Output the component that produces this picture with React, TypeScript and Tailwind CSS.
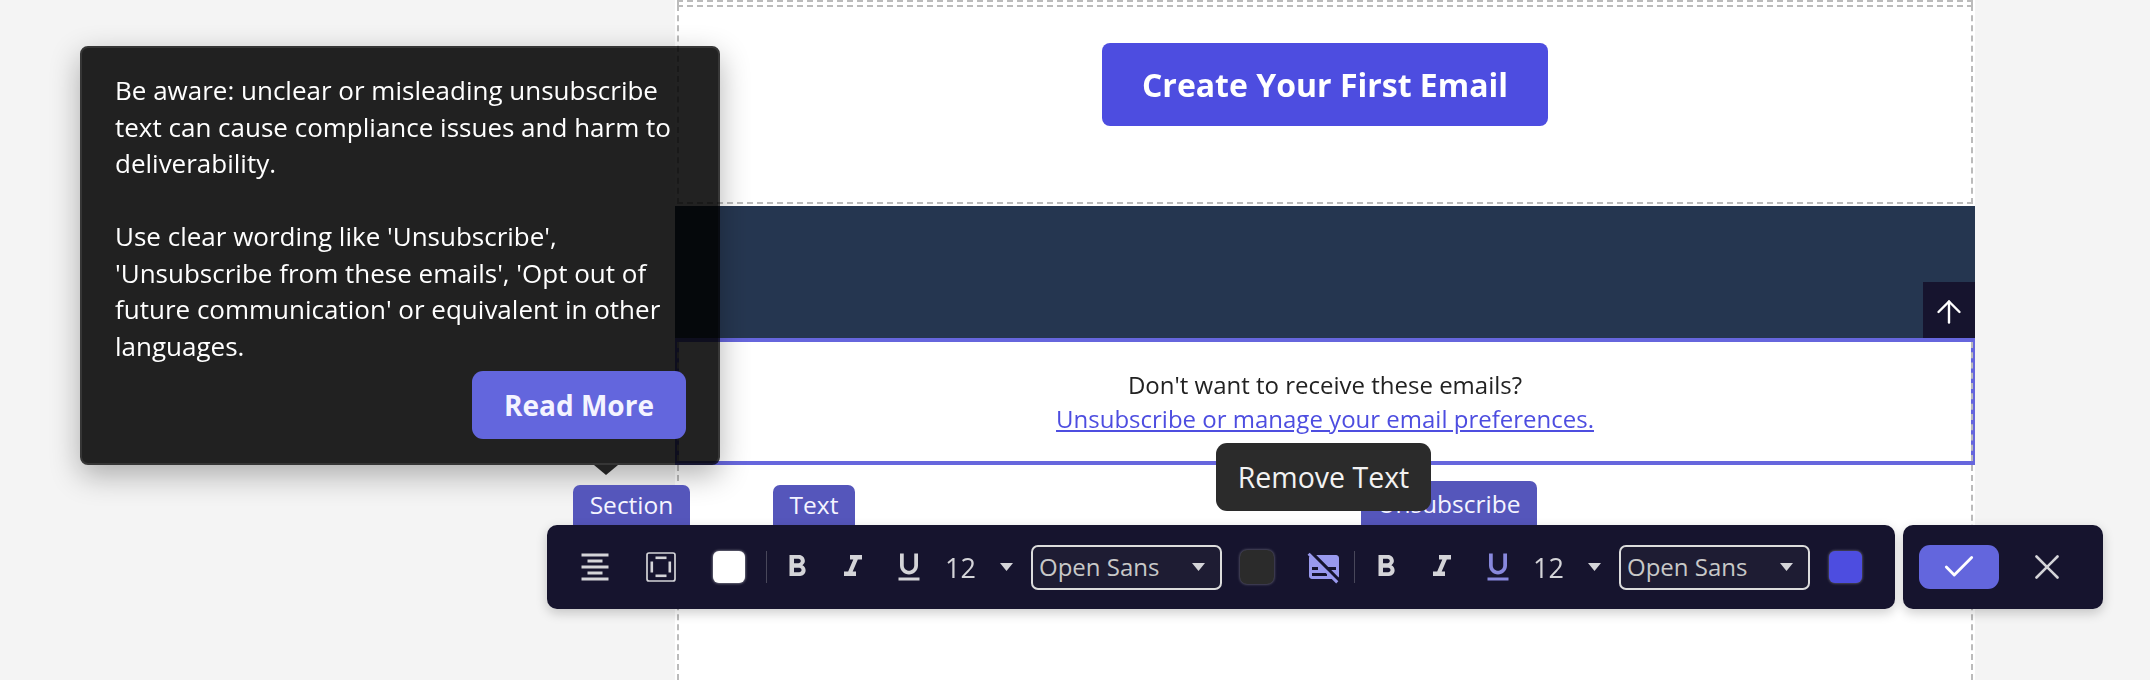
import React from "react";
import { ArrowUp, Check, X } from "lucide-react";
import {
  MdFormatAlignCenter,
  MdFormatBold,
  MdFormatItalic,
  MdFormatUnderlined,
  MdSubtitlesOff,
} from "react-icons/md";

const PaddingIcon = () => (
  <svg width="30" height="30" viewBox="0 0 30 30" fill="#d4d4d8">
    <rect x="1" y="1" width="28" height="28" rx="2" fill="none" stroke="#d4d4d8" strokeWidth="1.7" />
    <rect x="9.5" y="4.5" width="11" height="2.6" />
    <rect x="9.5" y="22.5" width="11" height="2.6" />
    <rect x="4.5" y="9.5" width="2.6" height="11" />
    <rect x="22.5" y="9.5" width="2.6" height="11" />
  </svg>
);

const Caret = () => (
  <svg width="13" height="8" viewBox="0 0 13 8" className="shrink-0">
    <path d="M0 0h13L6.5 8z" fill="#d4d4d8" />
  </svg>
);

const FontSelect = ({ className }: { className: string }) => (
  <div
    className={`flex h-[45px] w-[191px] items-center justify-between rounded-[7px] border-2 border-[#dcdcdc] bg-[#1e1c33] pl-[6px] pr-[15px] text-[24px] text-[#c8c8c8] ${className}`}
  >
    <span>Open Sans</span>
    <Caret />
  </div>
);

const FontSize = ({ className }: { className: string }) => (
  <span className={`w-[34px] text-[27px] leading-none text-[#d4d4d8] ${className}`}>12</span>
);

const Divider = ({ className }: { className: string }) => <div className={`h-[32px] w-[1px] bg-[#48475a] ${className}`} />;

const Tag = ({ label, className }: { label: string; className: string }) => (
  <div
    className={`absolute flex justify-center rounded-t-[7px] bg-[#5556bb] text-[24.5px] leading-[33px] text-[#f4f4ff] ${className}`}
  >
    {label}
  </div>
);

export default function App() {
  return (
    <div className="relative h-[680px] w-[2150px] overflow-hidden bg-[#f4f4f4] font-['Open_Sans',sans-serif]">
      {/* email canvas */}
      <div className="ml-[675px] flex h-[680px] w-[1300px] flex-col bg-white">
        <div className="mx-[2px] h-[5px] shrink-0 border-x-2 border-t-2 border-dashed border-[#bbbbbb]" />
        <div className="mx-[2px] flex h-[199px] shrink-0 justify-center border-2 border-dashed border-[#bbbbbb] pt-[36px]">
          <div className="flex h-[83px] w-[446px] items-center justify-center rounded-[8px] bg-[#4d4de0] text-[32px] font-bold text-white">
            Create Your First Email
          </div>
        </div>
        <div className="mt-[2px] flex h-[132px] shrink-0 items-end justify-end bg-[#253650]">
          <div className="flex h-[56px] w-[52px] items-center justify-center bg-[#16142e] pt-[4px] text-white">
            <ArrowUp size={36} strokeWidth={1.6} />
          </div>
        </div>
        <div className="h-[127px] shrink-0 border-4 border-[#6666dd]">
          <div className="-mx-[2px] flex h-full flex-col items-center justify-center border-x-2 border-dashed border-[#bbbbbb] text-[24px] leading-[34px] text-[#222222]">
            <p>Don't want to receive these emails?</p>
            <a className="text-[#4d4de0] underline">Unsubscribe or manage your email preferences.</a>
          </div>
        </div>
        <div className="mx-[2px] flex-1 border-x-2 border-dashed border-[#bbbbbb]" />
      </div>

      {/* warning popover, only its backing multiplies over the page */}
      <div className="absolute left-[80px] top-[46px] flex h-[419px] w-[640px] flex-col pl-[35px] pt-[26px] text-[26px] leading-[36.5px] text-white">
        <div className="absolute inset-0 mix-blend-multiply">
          <div className="h-full rounded-[8px] border-2 border-[#383838] bg-[#222222] shadow-[0_10px_30px_rgba(0,0,0,0.3)]" />
          <div className="absolute left-[514px] top-[419px] h-0 w-0 border-x-[12px] border-t-[10px] border-x-transparent border-t-[#222222]" />
        </div>
        <p className="relative w-[572px]">Be aware: unclear or misleading unsubscribe text can cause compliance issues and harm to deliverability.</p>
        <p className="relative mt-[36.5px] w-[572px]">
          Use clear wording like 'Unsubscribe', 'Unsubscribe from these emails', 'Opt out of future communication' or equivalent in other languages.
        </p>
        <div className="relative mr-[34px] mt-[7px] flex h-[68px] w-[214px] items-center justify-center self-end rounded-[11px] bg-[#6366dd] text-[28px] font-bold text-[#f4f4ff]">
          Read More
        </div>
      </div>

      {/* toolbars */}
      <div className="absolute left-[547px] top-[525px] flex gap-[8px]">
        <Tag label="Section" className="-top-[40px] left-[26px] h-[40px] w-[117px] pt-[3px]" />
        <Tag label="Text" className="-top-[40px] left-[226px] h-[40px] w-[82px] pt-[3px]" />
        <Tag label="Unsubscribe" className="-top-[44px] left-[814px] h-[44px] w-[176px] pt-[6px]" />

        <div className="relative flex h-[84px] w-[1348px] items-center rounded-[10px] bg-[#16142e] pl-[30px] text-[#d4d4d8] shadow-[0_4px_12px_rgba(0,0,0,0.2)]">
          <MdFormatAlignCenter size={36} className="shrink-0" />
          <div className="ml-[33px] shrink-0">
            <PaddingIcon />
          </div>
          <div className="ml-[37px] h-[32px] w-[32px] shrink-0 rounded-[6px] bg-white shadow-[0_0_3px_rgba(255,255,255,0.7)]" />
          <Divider className="ml-[21px]" />
          <MdFormatBold size={36} className="ml-[12px] shrink-0" />
          <MdFormatItalic size={36} className="ml-[20px] shrink-0" />
          <MdFormatUnderlined size={36} className="ml-[20px] shrink-0" />
          <FontSize className="ml-[18px]" />
          <div className="ml-[21px]">
            <Caret />
          </div>
          <FontSelect className="ml-[18px]" />
          <div className="ml-[18px] h-[34px] w-[34px] shrink-0 rounded-[7px] bg-[#2b2b2b] shadow-[0_0_3px_rgba(255,255,255,0.45)]" />
          <MdSubtitlesOff size={36} className="ml-[32px] shrink-0 text-[#9999ee]" />
          <Divider className="ml-[12px]" />
          <MdFormatBold size={36} className="ml-[13px] shrink-0" />
          <MdFormatItalic size={36} className="ml-[20px] shrink-0" />
          <MdFormatUnderlined size={36} className="ml-[20px] shrink-0 text-[#8888dd]" />
          <FontSize className="ml-[17px]" />
          <div className="ml-[21px]">
            <Caret />
          </div>
          <FontSelect className="ml-[18px]" />
          <div className="ml-[19px] h-[32px] w-[33px] shrink-0 rounded-[6px] bg-[#4d4de0] shadow-[0_0_3px_rgba(255,255,255,0.45)]" />
        </div>

        <div className="relative flex h-[84px] w-[200px] items-center rounded-[10px] bg-[#16142e] pl-[16px] shadow-[0_4px_12px_rgba(0,0,0,0.2)]">
          <div className="flex h-[44px] w-[80px] items-center justify-center rounded-[11px] bg-[#6366dd] text-white">
            <Check size={38} strokeWidth={1.8} />
          </div>
          <X size={42} strokeWidth={1.5} className="ml-[27px] text-[#d4d4d8]" />
        </div>

        <div className="absolute -top-[82px] left-[669px] flex h-[68px] w-[215px] items-center justify-center rounded-[11px] bg-[#2b2b2b] text-[28.5px] font-medium text-[#f2f2f2]">
          Remove Text
        </div>
      </div>
    </div>
  );
}
